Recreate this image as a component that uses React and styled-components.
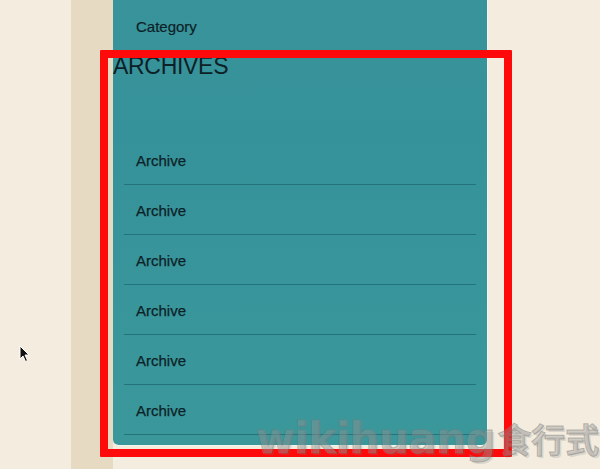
import React from "react"
import styled, { createGlobalStyle } from "styled-components"

const GlobalStyle = createGlobalStyle`
  html, body {
    margin: 0;
    padding: 0;
    background: #f3ecdf;
    font-family: "Liberation Sans", Arial, sans-serif;
  }
`

const Page = styled.div`
  position: relative;
  display: flex;
  width: 600px;
  height: 469px;
  overflow: hidden;
  background: #f3ecdf;
`
const Gap = styled.div`
  width: 71px;
  flex: none;
`
const Rail = styled.div`
  width: 42px;
  flex: none;
  background: #e6dac3;
`
const Panel = styled.aside`
  width: 374px;
  height: 445px;
  flex: none;
  background: linear-gradient(180deg, #38939a 0%, #36929a 30%, #3a989b 100%);
  border-radius: 0 0 6px 6px;
  border-right: 1px solid #eef6ef;
  border-bottom: 1px solid #eef6ef;
  color: #0d1f27;
`
const CategoryRow = styled.div`
  height: 52px;
  display: flex;
  align-items: center;
  padding-left: 23px;
  font-size: 15px;
  -webkit-text-stroke: 0.2px #0d1f27;
`
const Heading = styled.h2`
  margin: 0;
  font-size: 23px;
  font-weight: 400;
  line-height: 28px;
  letter-spacing: -0.3px;
`
const List = styled.ul`
  list-style: none;
  margin: 55px 11px 0;
  padding: 0;
`
const Item = styled.li`
  box-sizing: border-box;
  height: 50px;
  display: flex;
  align-items: center;
  padding: 1px 0 0 12px;
  border-bottom: 1px solid #24737a;
  font-size: 15px;
  -webkit-text-stroke: 0.25px #0d1f27;
`
const Annotation = styled.div`
  position: absolute;
  left: 100px;
  top: 50px;
  width: 396px;
  height: 391px;
  border: 8px solid #ff0a0a;
  border-radius: 1px;
`
const Cursor = styled.svg`
  position: absolute;
  left: 19px;
  top: 345px;
`
const Watermark = styled.div`
  position: absolute;
  left: 256px;
  top: 414px;
  display: flex;
  align-items: baseline;
  gap: 2px;
  color: rgba(150, 150, 150, 0.38);
  -webkit-text-stroke: 1px rgba(120, 120, 120, 0.45);
  text-shadow: 2px 2px 0 rgba(120, 120, 120, 0.2);
  white-space: nowrap;
`
const Latin = styled.span`
  font-family: "DejaVu Sans", sans-serif;
  font-weight: 700;
  font-size: 42px;
  letter-spacing: -0.5px;
`
const Cjk = styled.span`
  font-family: "Noto Sans CJK SC", sans-serif;
  font-weight: 700;
  font-size: 34px;
`

const archives = ["Archive", "Archive", "Archive", "Archive", "Archive", "Archive"]

export default function App() {
  return (
    <Page>
      <GlobalStyle />
      <Gap />
      <Rail />
      <Panel>
        <CategoryRow>Category</CategoryRow>
        <Heading>ARCHIVES</Heading>
        <List>
          {archives.map((a, i) => (
            <Item key={i}>{a}</Item>
          ))}
        </List>
      </Panel>
      <Annotation />
      <Cursor width="12" height="18" viewBox="0 0 12 18">
        <path d="M1 1 L1 14 L4 11 L6.5 16.5 L8.5 15.5 L6 10 L10 10 Z" fill="#111" stroke="#fff" strokeWidth="1" />
      </Cursor>
      <Watermark>
        <Latin>wikihuang</Latin>
        <Cjk>食行式</Cjk>
      </Watermark>
    </Page>
  )
}
